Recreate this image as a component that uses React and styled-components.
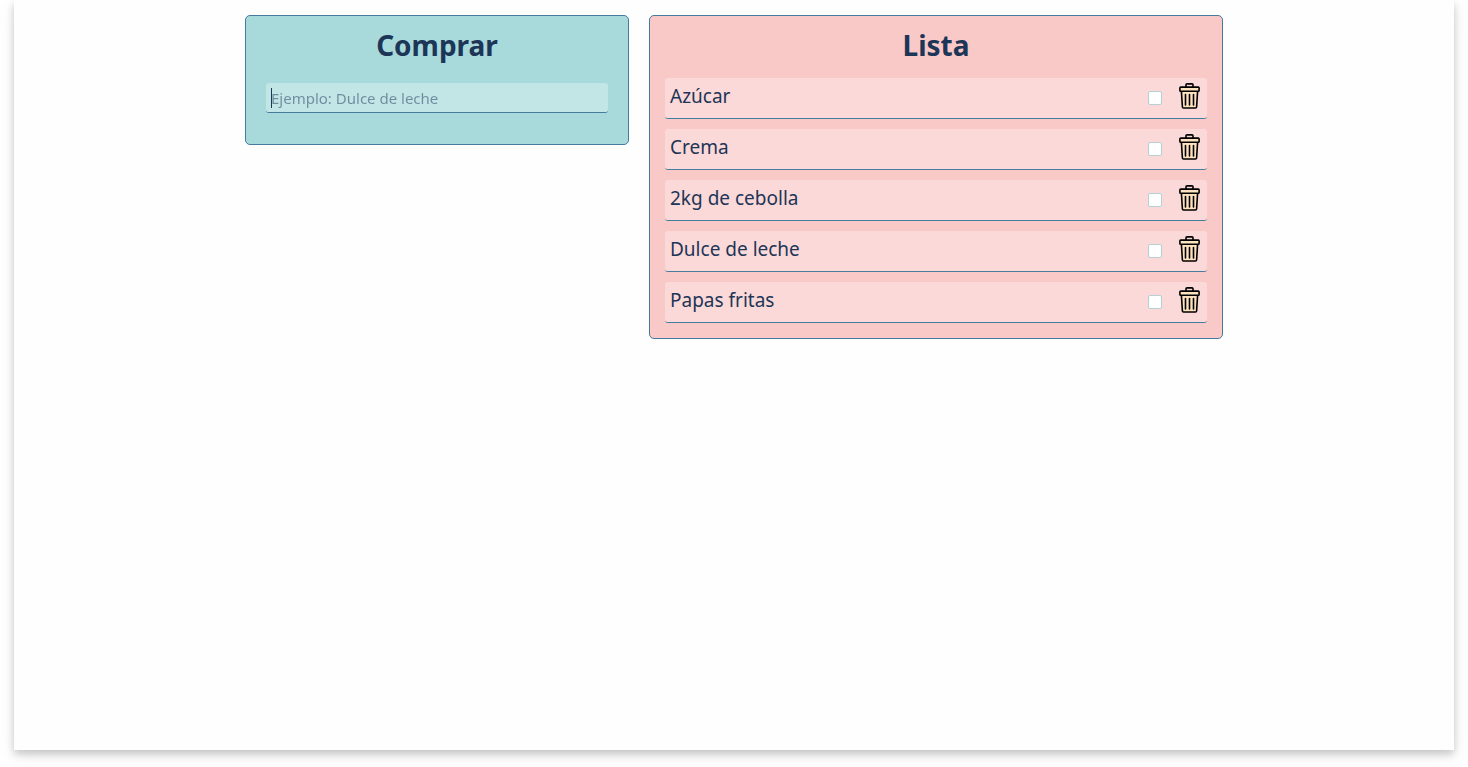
import React, { useState } from "react";
import styled, { createGlobalStyle } from "styled-components";

const GlobalStyle = createGlobalStyle`
  *, *::before, *::after { box-sizing: border-box; }
  body {
    margin: 0;
    background: #ffffff;
    color: #1d3557;
    font-family: "Noto Sans", "Open Sans", sans-serif;
    font-size: 16px;
  }
`;

const Sheet = styled.main`
  min-height: calc(100vh - 17px);
  margin: 0 14px 17px;
  padding: 15px;
  background: #fefefe;
  box-shadow: 0 4px 8px rgba(0, 0, 0, 0.2), 0 6px 20px rgba(0, 0, 0, 0.06);
`;

const Columns = styled.div`
  display: grid;
  grid-template-columns: minmax(0, 192fr) minmax(0, 287fr);
  align-items: start;
  gap: 20px;
  max-width: 978px;
  margin: 0 auto;
`;

const Panel = styled.section`
  padding: 10px 15px 15px;
  border: 1px solid #457b9d;
  border-radius: 5px;
  background: ${({ $tone }) => ($tone === "list" ? "#f9c9c8" : "#a8dadc")};
`;

const Title = styled.h2`
  margin: 0 0 14px;
  font-size: 28px;
  font-weight: 700;
  line-height: 38px;
  text-align: center;
`;

const Form = styled.form`
  padding: 5px 5px 16px;
`;

const Field = styled.div`
  position: relative;

  &:has(input:placeholder-shown:focus)::after {
    content: "";
    position: absolute;
    top: 5px;
    left: 5px;
    width: 1px;
    height: 20px;
    background: #1d3557;
    pointer-events: none;
  }
`;

const TextField = styled.input`
  display: block;
  width: 100%;
  height: 30px;
  padding: 0 5px;
  border: 0;
  border-bottom: 1px solid #457b9d;
  border-radius: 3px;
  outline: 0;
  background: rgba(255, 255, 255, 0.3);
  color: #1d3557;
  font: inherit;
  font-size: 15px;

  &::placeholder { color: #1d3557; opacity: 0.5; }
  &:placeholder-shown { caret-color: transparent; }
`;

const Items = styled.ul`
  display: grid;
  gap: 10px;
  margin: 0;
  padding: 0;
  list-style: none;
`;

const Item = styled.li`
  display: flex;
  align-items: center;
  height: 41px;
  padding: 0 5px 5px;
  border-bottom: 1px solid #457b9d;
  border-radius: 3px;
  background: rgba(255, 255, 255, 0.3);
`;

const ItemName = styled.label`
  flex: 1;
  font-size: 19px;
  line-height: 28px;
`;

const Check = styled.input`
  appearance: none;
  width: 14px;
  height: 14px;
  margin: 5px 15px 0 0;
  border: 1px solid #b4d2d4;
  border-radius: 2px;
  background: #ffffff;

  &:checked { background: #457b9d; }
`;

const DeleteButton = styled.button`
  display: flex;
  justify-content: center;
  width: 25px;
  padding: 0;
  border: 0;
  background: none;
  cursor: pointer;
`;

const TrashIcon = () => (
  <svg width="21" height="26" viewBox="0 0 21 26" fill="none" stroke="#000" strokeWidth="1.6" strokeLinejoin="round" strokeLinecap="round" aria-hidden="true">
    <path d="M7 4V1.8Q7 .9 8 .9h5q1 0 1 .9V4" />
    <path d="M2.4 8.3 3.4 24q.1 1 1.1 1h12q1 0 1.1-1l1-15.7z" fill="#fee1bd" />
    <rect x=".9" y="4.1" width="19.2" height="4.2" rx=".8" fill="#fee1bd" />
    <path d="M6.5 11.5v10.5M10.5 11.5v10.5M14.5 11.5v10.5" />
  </svg>
);

const initialItems = ["Azúcar", "Crema", "2kg de cebolla", "Dulce de leche", "Papas fritas"];

export default function App() {
  const [items, setItems] = useState(initialItems);
  const [draft, setDraft] = useState("");

  const addItem = (event) => {
    event.preventDefault();
    const name = draft.trim();
    if (name) {
      setItems([...items, name]);
      setDraft("");
    }
  };

  return (
    <>
      <GlobalStyle />
      <Sheet>
        <Columns>
          <Panel $tone="form">
            <Title id="buy-title">Comprar</Title>
            <Form onSubmit={addItem}>
              <Field>
                <TextField
                  type="text"
                  aria-labelledby="buy-title"
                  placeholder="Ejemplo: Dulce de leche"
                  value={draft}
                  onChange={(event) => setDraft(event.target.value)}
                  autoFocus
                />
              </Field>
            </Form>
          </Panel>
          <Panel $tone="list">
            <Title>Lista</Title>
            <Items>
              {items.map((name, index) => (
                <Item key={name}>
                  <ItemName htmlFor={`item-${index}`}>{name}</ItemName>
                  <Check type="checkbox" id={`item-${index}`} />
                  <DeleteButton
                    type="button"
                    aria-label={`Eliminar ${name}`}
                    onClick={() => setItems(items.filter((item) => item !== name))}
                  >
                    <TrashIcon />
                  </DeleteButton>
                </Item>
              ))}
            </Items>
          </Panel>
        </Columns>
      </Sheet>
    </>
  );
}
